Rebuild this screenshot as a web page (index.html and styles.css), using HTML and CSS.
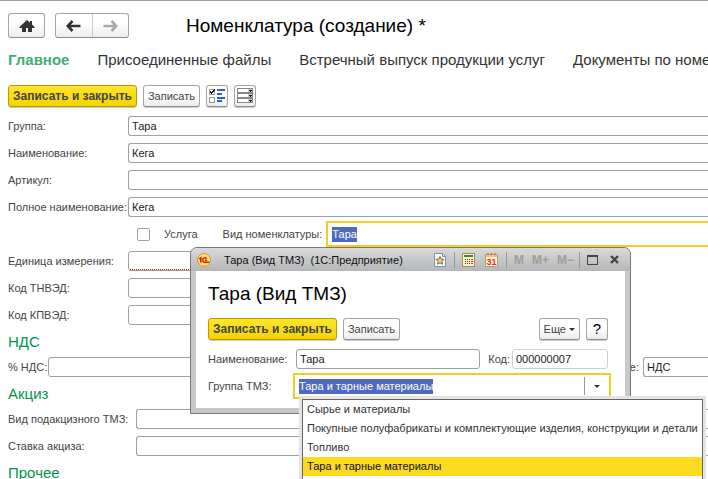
FILE: index.html
```html
<!DOCTYPE html>
<html lang="ru">
<head>
    <meta charset="UTF-8">
    <meta name="viewport" content="width=device-width, initial-scale=1.0">
    <title>Номенклатура (создание)</title>
    <link rel="stylesheet" href="styles.css">
</head>
<body>

<main class="page">
    <header class="header">
        <button class="btn home" type="button" aria-label="Домой">
            <svg width="16" height="14" viewBox="0 0 16 14"><path d="M8 1L.5 8v1H3v4h4V9h2v4h4V9h2.500V8L13 5.600V2h-2v1.700z" fill="#333"/></svg>
        </button>
        <div class="history">
            <button type="button" aria-label="Назад">
                <svg width="15" height="12" viewBox="0 0 15 12"><path d="M14.500 6H3M6.500 1L1.800 6l4.700 5" fill="none" stroke="#333" stroke-width="2.600"/></svg>
            </button>
            <button type="button" aria-label="Вперед" disabled>
                <svg width="15" height="12" viewBox="0 0 15 12"><path d="M.5 6H12M8.500 1l4.700 5-4.700 5" fill="none" stroke="#aaa" stroke-width="2.600"/></svg>
            </button>
        </div>
        <h1>Номенклатура (создание) *</h1>
    </header>

    <nav class="tabs">
        <a class="active" href="#">Главное</a>
        <a href="#">Присоединенные файлы</a>
        <a href="#">Встречный выпуск продукции услуг</a>
        <a href="#">Документы по номенклатуре</a>
    </nav>

    <div class="toolbar">
        <button class="btn primary" type="button">Записать и закрыть</button>
        <button class="btn" type="button">Записать</button>
        <button class="btn icon" type="button" aria-label="Настройка списка">
            <svg width="16" height="14" viewBox="0 0 16 14" shape-rendering="crispEdges">
                <path d="M.5.500h5v5h-5zM.5 8.500h5v5h-5z" fill="#fff" stroke="#999"/>
                <path d="M1 2h1v1h1v-1h1v-1h1v-1h1v2h-1v1h-1v1h-1v1h-1v-1h-1z" fill="#111"/>
                <path d="M8 0h8v2H8zM8 4h5v2H8zM8 8h8v2H8zM8 11h5v2H8z" fill="#2a5fd0"/>
            </svg>
        </button>
        <button class="btn icon" type="button" aria-label="Поля формы">
            <svg width="16" height="16" viewBox="0 0 16 16" shape-rendering="crispEdges">
                <path d="M.5.500h15v4H.5zM.5 5.500h15v4H.5zM.5 10.500h15v4H.5z" fill="#fff" stroke="#888"/>
                <path d="M11 1h4v3h-4zM11 6h4v3h-4zM11 11h4v3h-4z" fill="#ccc"/>
                <path d="M12 2h3v1h-1v1h-1v-1h-1zM12 7h3v1h-1v1h-1v-1h-1zM12 12h3v1h-1v1h-1v-1h-1z" fill="#222"/>
            </svg>
        </button>
    </div>

    <form class="form">
        <div class="row">
            <label for="group">Группа:</label>
            <input class="field open" type="text" id="group" value="Тара">
        </div>
        <div class="row">
            <label for="name">Наименование:</label>
            <input class="field open" type="text" id="name" value="Кега">
        </div>
        <div class="row">
            <label for="article">Артикул:</label>
            <input class="field open" type="text" id="article">
        </div>
        <div class="row">
            <label for="full-name">Полное наименование:</label>
            <input class="field open" type="text" id="full-name" value="Кега">
        </div>
        <div class="row service">
            <input class="check" type="checkbox" id="service">
            <label for="service">Услуга</label>
            <label class="kind-label" for="kind">Вид номенклатуры:</label>
            <div class="combo open">
                <input class="selected" type="text" id="kind" value="Тара">
            </div>
        </div>
        <div class="row">
            <label for="unit">Единица измерения:</label>
            <span class="required"><input class="field" type="text" id="unit"></span>
        </div>
        <div class="row">
            <label for="tnved">Код ТНВЭД:</label>
            <input class="field short" type="text" id="tnved">
        </div>
        <div class="row">
            <label for="kpved">Код КПВЭД:</label>
            <input class="field short" type="text" id="kpved">
        </div>

        <h2>НДС</h2>
        <div class="row vat">
            <label for="vat">% НДС:</label>
            <input class="field" type="text" id="vat">
            <label for="vat-kind">Назначение:</label>
            <input class="field open" type="text" id="vat-kind" value="НДС">
        </div>

        <h2>Акциз</h2>
        <div class="row excise">
            <label for="excise-kind">Вид подакцизного ТМЗ:</label>
            <input class="field open" type="text" id="excise-kind">
        </div>
        <div class="row excise">
            <label for="excise-rate">Ставка акциза:</label>
            <input class="field open" type="text" id="excise-rate">
        </div>

        <h2>Прочее</h2>
    </form>
</main>

<section class="dialog" role="dialog" aria-labelledby="dialog-title">
    <div class="titlebar">
        <svg class="logo" width="14" height="14" viewBox="0 0 14 14">
            <circle cx="7" cy="7" r="6.500" fill="#ffe06a" stroke="#d99a3a"/>
            <path d="M2 6l1.800-1.200V9.500" fill="none" stroke="#e01010" stroke-width="1.500"/>
            <path d="M9.500 5.700C8.500 4.200 5.800 4.700 5.800 7c0 1.500 1 2.200 2.200 2.200h4.500M8 7.200h2" fill="none" stroke="#e01010" stroke-width="1.400"/>
        </svg>
        <span class="caption">Тара (Вид ТМЗ)&nbsp; (1С:Предприятие)</span>
        <div class="tools">
            <button type="button" aria-label="Избранное">
                <svg width="12" height="14" viewBox="0 0 12 14">
                    <path d="M.5.500h8l3 3v10H.5z" fill="#f4f9fd" stroke="#7894ac"/>
                    <path d="M8.500.500v3h3" fill="none" stroke="#7894ac"/>
                    <path d="M6 3.500l1.200 2.500 2.800.4-2 2 .5 2.800L6 9.900l-2.500 1.300.5-2.800-2-2 2.800-.4z" fill="#f6c778" stroke="#6b5536" stroke-width=".8"/>
                </svg>
            </button>
        </div>
        <div class="tools">
            <button type="button" aria-label="Калькулятор">
                <svg width="13" height="14" viewBox="0 0 13 14" shape-rendering="crispEdges">
                    <path d="M.5.500h12v13H.5z" fill="#fff0c8" stroke="#b08a58"/>
                    <path d="M2 2h9v2H2z" fill="#2f8f2f"/>
                    <path d="M3 6h1v1H3zM5 6h1v1H5zM7 6h1v1H7zM3 8h1v1H3zM5 8h1v1H5zM7 8h1v1H7zM3 10h1v1H3zM5 10h1v1H5zM7 10h1v1H7z" fill="#5a3c20"/>
                    <path d="M9 6h2v1H9zM9 8h2v1H9zM9 10h2v1H9z" fill="#d33"/>
                </svg>
            </button>
            <button type="button" aria-label="Календарь">
                <svg width="13" height="14" viewBox="0 0 13 14">
                    <path d="M.5 1.500h12v12H.5z" fill="#fff3dc" stroke="#c09868"/>
                    <path d="M1 2h11v2H1z" fill="#f3c47c"/>
                    <path d="M3 0v2M6.500 0v2M10 0v2" stroke="#9a6a3a"/>
                    <text x="6.500" y="12" text-anchor="middle" class="day">31</text>
                </svg>
            </button>
        </div>
        <div class="tools memory">
            <button type="button" disabled>M</button>
            <button type="button" disabled>M+</button>
            <button type="button" disabled>M−</button>
        </div>
        <div class="tools window">
            <button type="button" aria-label="Развернуть">
                <svg width="11" height="10" viewBox="0 0 11 10" shape-rendering="crispEdges"><path d="M0 0h11v10H0zM1 2v7h9V2z" fill="#444" fill-rule="evenodd"/></svg>
            </button>
            <button type="button" aria-label="Закрыть">
                <svg width="9" height="9" viewBox="0 0 9 9"><path d="M1 1l7 7M8 1L1 8" stroke="#444" stroke-width="2.400"/></svg>
            </button>
        </div>
    </div>

    <div class="content">
        <h2 id="dialog-title">Тара (Вид ТМЗ)</h2>
        <div class="toolbar">
            <button class="btn primary" type="button">Записать и закрыть</button>
            <button class="btn" type="button">Записать</button>
            <button class="btn more" type="button">Еще <span class="arrow"></span></button>
            <button class="btn help" type="button">?</button>
        </div>
        <div class="row">
            <label for="d-name">Наименование:</label>
            <input class="field" type="text" id="d-name" value="Тара">
            <label class="code-label" for="d-code">Код:</label>
            <input class="field code" type="text" id="d-code" value="000000007">
        </div>
        <div class="row">
            <label for="d-group">Группа ТМЗ:</label>
            <div class="combo">
                <input class="selected" type="text" id="d-group" value="Тара и тарные материалы" role="combobox" aria-expanded="true" aria-controls="groups">
                <button class="drop" type="button" aria-label="Выбрать"><span class="arrow"></span></button>
                <ul class="list" id="groups" role="listbox">
                    <li role="option">Сырье и материалы</li>
                    <li role="option">Покупные полуфабрикаты и комплектующие изделия, конструкции и детали</li>
                    <li role="option">Топливо</li>
                    <li class="current" role="option" aria-selected="true">Тара и тарные материалы</li>
                </ul>
            </div>
        </div>
    </div>
</section>

</body>
</html>
```

FILE: styles.css
```css
* {
    box-sizing: border-box;
}

html, body {
    height: 100%;
}

body {
    position: relative;
    margin: 0;
    overflow: hidden;
    background: #fff;
    color: #444;
    font-family: "Liberation Sans", Arial, sans-serif;
    font-size: 11px;
    line-height: 14px;
}

button, input {
    font: inherit;
    color: inherit;
}

h1, h2 {
    margin: 0;
    font-weight: normal;
}

.page {
    height: 100%;
    overflow: hidden;
    border-top: 1px solid #a0a0a0;
    padding: 12px 0 0 8px;
}

/* top */
.header {
    display: flex;
    align-items: center;
    gap: 10px;
    height: 25px;
}

h1 {
    margin-left: 47px;
    color: #000;
    font-size: 19px;
    line-height: 24px;
}

.btn, .history {
    display: flex;
    align-items: center;
    justify-content: center;
    border: 1px solid #a6a6a6;
    border-bottom-color: #8c8c8c;
    border-radius: 3px;
    background: linear-gradient(#fff 40%, #ececec);
}

.btn {
    height: 22px;
    padding: 0 4px;
    white-space: nowrap;
    box-shadow: 0 1px 0 #ccc;
}

.home {
    width: 37px;
    height: 25px;
    box-shadow: none;
}

.history {
    width: 74px;
    height: 25px;
}

.history button {
    display: flex;
    flex: 1;
    align-items: center;
    justify-content: center;
    height: 100%;
    padding: 0;
    border: none;
    background: none;
}

.history button + button {
    border-left: 1px solid #ccc;
}

.tabs {
    display: flex;
    gap: 28px;
    margin-top: 12px;
    font-size: 15px;
    line-height: 20px;
    white-space: nowrap;
}

.tabs a {
    color: #333;
    text-decoration: none;
}

.tabs .active {
    color: #3fae70;
    font-weight: bold;
}

.toolbar {
    display: flex;
    gap: 6px;
}

.page > .toolbar {
    margin: 15px 0 9px;
}

.primary {
    border-color: #b39b00;
    background: linear-gradient(#ffe52e, #f3d400);
    font-size: 12px;
    font-weight: bold;
}

.icon {
    width: 22px;
    padding: 0;
}

/* fields */
.row {
    display: grid;
    grid-template-columns: 120px 1fr;
    grid-template-rows: 20px;
    align-items: center;
    height: 20px;
    margin-bottom: 7px;
    white-space: nowrap;
}

.field {
    width: 100%;
    min-width: 0;
    height: 20px;
    padding: 0 3px;
    border: 1px solid #a0a0a0;
    border-radius: 3px;
    background: #fff;
    color: #222;
}

.field.open {
    border-right: none;
    border-radius: 3px 0 0 3px;
}

.short, .required {
    width: 160px;
}

.required {
    position: relative;
}

.required .field {
    display: block;
}

.required::after {
    content: "";
    position: absolute;
    right: 2px;
    bottom: 1px;
    left: 2px;
    height: 1px;
    background: repeating-linear-gradient(90deg, #f00 0 1px, #fff 1px 2px);
}

.service {
    display: flex;
    padding-left: 129px;
}

.check {
    appearance: none;
    width: 13px;
    height: 13px;
    margin: 0 14px 0 0;
    border: 1px solid #a0a0a0;
    border-radius: 2px;
    background: #fff;
}

.kind-label {
    margin: 0 4px 0 25px;
}

.combo {
    position: relative;
    display: flex;
    flex: 1;
    align-items: center;
    height: 26px;
    padding-left: 4px;
    border: 2px solid #f9cb1f;
    background: #fff;
}

.combo.open {
    border-right: none;
}

.selected {
    field-sizing: content;
    height: 15px;
    padding: 0;
    border: none;
    background: #4f69c1;
    color: #fff;
}

.form h2 {
    margin: 0 0 5px;
    color: #009646;
    font-size: 15px;
    line-height: 20px;
}

.form .vat {
    grid-template-columns: 40px 510px 85px 1fr;
}

.vat label + input + label {
    padding-right: 4px;
    text-align: right;
}

.excise {
    grid-template-columns: 128px 1fr;
}

/* dialog */
.dialog {
    position: absolute;
    top: 247px;
    left: 190px;
    width: 441px;
    padding: 0 5px 5px;
    border: 1px solid #777;
    border-radius: 7px 7px 0 0;
    background: #c6c8ca;
}

.titlebar {
    display: flex;
    align-items: center;
    height: 23px;
    margin: 0 -5px;
    padding: 0 11px 0 6px;
    border-radius: 6px 6px 0 0;
    background: linear-gradient(#d8d9da, #b4b6b8);
    color: #111;
}

.caption {
    flex: 1;
    margin-left: 13px;
    white-space: nowrap;
}

.tools {
    display: flex;
    align-items: center;
    gap: 10px;
    height: 16px;
}

.tools + .tools {
    margin-left: 8px;
    padding-left: 7px;
    border-left: 1px solid #999;
}

.tools button {
    display: flex;
    padding: 0;
    border: none;
    background: none;
}

.tools.memory {
    gap: 8px;
}

.memory button {
    color: #a59d96;
    font-size: 12px;
    font-weight: bold;
}

.tools.window {
    gap: 12px;
    margin-left: 5px;
}

.day {
    fill: #e03020;
    font-size: 9px;
    font-weight: bold;
}

.content {
    padding: 11px 17px 12px 12px;
    background: #fff;
}

.content h2 {
    margin-bottom: 12px;
    color: #000;
    font-size: 19px;
    line-height: 24px;
}

.content .toolbar {
    margin-bottom: 9px;
}

.more {
    gap: 3px;
    margin-left: auto;
}

.help {
    width: 22px;
    color: #000;
    font-size: 15px;
}

.arrow {
    border: 3px solid transparent;
    border-top-color: #333;
    border-bottom: none;
}

.content .row {
    grid-template-columns: 88px 184px 30px 1fr;
}

.content .row:last-child {
    grid-template-columns: 85px 1fr;
    margin: 0 -3px 0 0;
}

.code-label {
    text-align: right;
}

.content .row .code {
    justify-self: end;
    width: 96px;
    border-color: #d0d0d0;
}

.drop {
    display: flex;
    align-items: center;
    justify-content: center;
    width: 25px;
    height: 18px;
    margin-left: auto;
    padding: 0;
    border: none;
    border-left: 1px solid #999;
    background: none;
}

.list {
    position: absolute;
    top: 24px;
    left: 7px;
    z-index: 1;
    margin: 0;
    padding: 0 0 4px;
    border: 1px solid #666;
    outline: 3px solid #e4e4e4;
    background: #fff;
    color: #333;
    list-style: none;
}

.list li {
    padding: 0 4px;
    line-height: 19px;
}

.list .current {
    background: #fcda20;
    color: #111;
}
```
